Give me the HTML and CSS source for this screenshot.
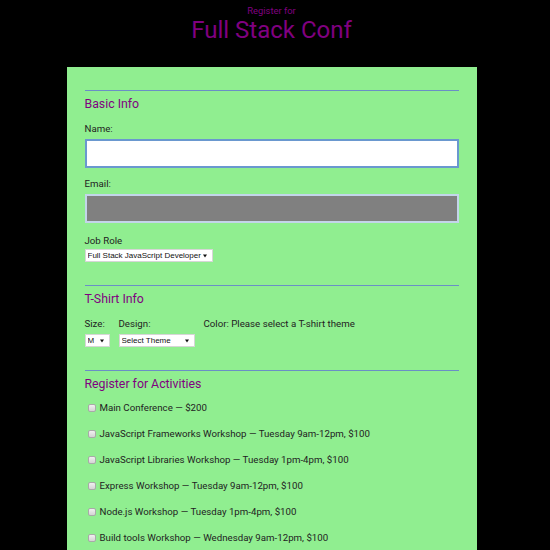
FILE: index.html
```html
<!DOCTYPE html>
<html lang="en">
<head>
<meta charset="utf-8">
<title>Full Stack Conf</title>
<link rel="stylesheet" href="styles.css">
</head>
<body>
<div class="page">
  <header class="masthead">
    <p class="kicker">Register for</p>
    <h1 class="title">Full Stack Conf</h1>
  </header>
  <form class="card">
    <fieldset class="section">
      <h2 class="section-title">Basic Info</h2>
      <label class="label" for="name">Name:</label>
      <input class="text-input name-input" id="name" type="text">
      <label class="label" for="mail">Email:</label>
      <input class="text-input mail-input" id="mail" type="email">
      <label class="label" for="title">Job Role</label>
      <select class="select job-select" id="title">
        <option>Full Stack JavaScript Developer</option>
      </select>
    </fieldset>
    <fieldset class="section">
      <h2 class="section-title">T-Shirt Info</h2>
      <div class="shirt-row">
        <div class="shirt-col">
          <label class="label" for="size">Size:</label>
          <select class="select size-select" id="size"><option>M</option></select>
        </div>
        <div class="shirt-col">
          <label class="label" for="design">Design:</label>
          <select class="select design-select" id="design"><option>Select Theme</option></select>
        </div>
        <div class="shirt-col color-col">
          <span class="label">Color: Please select a T-shirt theme</span>
        </div>
      </div>
    </fieldset>
    <fieldset class="section activities">
      <h2 class="section-title">Register for Activities</h2>
      <label class="activity"><input class="check" type="checkbox"> Main Conference — $200</label>
      <label class="activity"><input class="check" type="checkbox"> JavaScript Frameworks Workshop — Tuesday 9am-12pm, $100</label>
      <label class="activity"><input class="check" type="checkbox"> JavaScript Libraries Workshop — Tuesday 1pm-4pm, $100</label>
      <label class="activity"><input class="check" type="checkbox"> Express Workshop — Tuesday 9am-12pm, $100</label>
      <label class="activity"><input class="check" type="checkbox"> Node.js Workshop — Tuesday 1pm-4pm, $100</label>
      <label class="activity"><input class="check" type="checkbox"> Build tools Workshop — Wednesday 9am-12pm, $100</label>
    </fieldset>
  </form>
</div>
</body>
</html>
```
FILE: styles.css
```css
html, body {
  margin: 0;
  padding: 0;
  background: #000;
  height: 100%;
  overflow: hidden;
}
body {
  font-family: Roboto, "Noto Sans", sans-serif;
  color: #222;
}
.page {
  width: 543px;
}
.masthead {
  text-align: center;
  color: #800080;
  padding-top: 5px;
}
.kicker {
  margin: 0;
  font-size: 9.4px;
  line-height: 11px;
}
.title {
  margin: 0;
  font-size: 24px;
  font-weight: 400;
  line-height: 28px;
}
.card {
  width: 374px;
  margin: 23px auto 0;
  padding: 18px 18px 40px;
  background: #90ee90;
  min-height: 600px;
}
.section {
  margin: 0;
  padding: 0;
  border: 0;
  border-top: 1px solid #6a8fc6;
  padding-top: 5px;
  margin-top: 5px;
  display: flex;
  flex-direction: column;
  align-items: flex-start;
}
.section + .section {
  margin-top: 23px;
}
.section-title {
  margin: 0 0 10px;
  font-size: 12.3px;
  line-height: 16px;
  font-weight: 400;
  color: #800080;
}
.label {
  display: block;
  font-size: 9.7px;
  line-height: 14px;
  margin-bottom: 3px;
}
.text-input {
  box-sizing: border-box;
  width: 100%;
  height: 29px;
  margin: 0 0 9px;
  padding: 0 6px;
  border: 2px solid #6a98cf;
  font: inherit;
}
.name-input {
  background: #fff;
}
.mail-input {
  background: #808080;
  border-color: #c3d5ea;
  margin-bottom: 11px;
}
.select {
  appearance: none;
  -webkit-appearance: none;
  box-sizing: border-box;
  height: 13px;
  margin: 0;
  padding: 0 9px 0 2px;
  border: 1px solid #d6d6d6;
  border-radius: 0;
  background: #fff url("data:image/svg+xml,%3Csvg xmlns='http://www.w3.org/2000/svg' width='4' height='4'%3E%3Cpath d='M0 0.5h4L2 3.5z' fill='%23111'/%3E%3C/svg%3E") no-repeat right 5px center;
  font-family: "Liberation Sans", Arial, sans-serif;
  font-size: 8px;
  line-height: 11px;
  color: #111;
}
.job-select {
  width: 128px;
  margin-top: -2px;
}
.shirt-row {
  display: flex;
  gap: 9px;
}
.shirt-col {
  display: flex;
  flex-direction: column;
}
.size-select {
  width: 25px;
}
.design-select {
  width: 76px;
}
.activities .section-title {
  margin-bottom: 9px;
}
.activity {
  display: flex;
  align-items: center;
  font-size: 9.7px;
  line-height: 14px;
  margin-bottom: 12px;
}
.check {
  appearance: none;
  -webkit-appearance: none;
  box-sizing: border-box;
  width: 8px;
  height: 8px;
  margin: 0 4px 0 3px;
  border: 1px solid #a9a9a9;
  border-radius: 2px;
  background: linear-gradient(#f0f0f0, #d4d4d4);
}
```
